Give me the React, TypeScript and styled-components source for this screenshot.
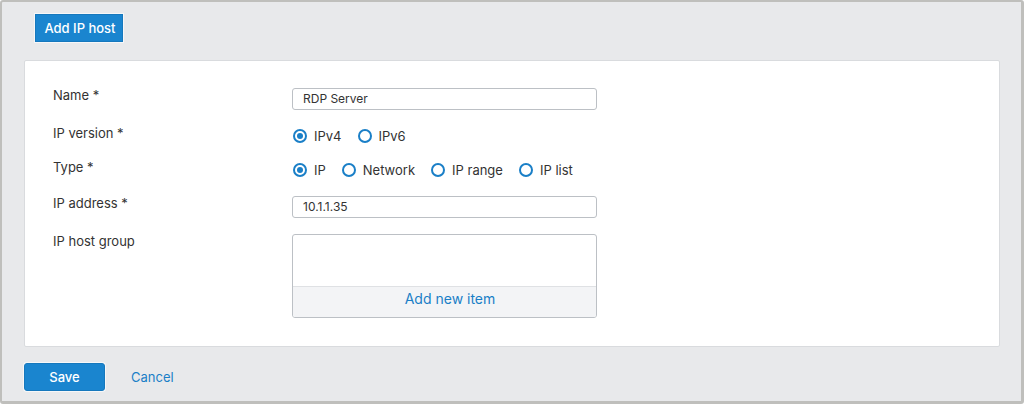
import React from "react";
import styled, { createGlobalStyle } from "styled-components";

const Global = createGlobalStyle`
  html, body { margin: 0; padding: 0; }
  body { font-family: Inter, "Noto Sans", "Liberation Sans", sans-serif; color: #333; }
  * { box-sizing: border-box; }
`;

const Frame = styled.div`
  width: 1024px;
  height: 404px;
  background: #e8e9eb;
  border-style: solid;
  border-color: #bfbfbc;
  border-width: 2px 3px 3px 2px;
  border-radius: 3px;
  padding: 12px 21px 0 22px;
  display: flex;
  flex-direction: column;
`;

const Header = styled.div`
  display: flex;
  padding-left: 11px;
  height: 28px;
`;

const PrimaryButton = styled.button<{ $w: number }>`
  width: ${(p) => p.$w}px;
  height: 28px;
  background: #1a85cf;
  border: 1px solid #1678bd;
  border-radius: 3px;
  color: #fff;
  font-family: inherit;
  font-size: 13px;
  font-weight: 500;
  padding: 0;
  cursor: pointer;
  box-shadow: 0 0 0 1px #f6f7f8;
`;

const HeaderButton = styled(PrimaryButton)`
  border-radius: 0;
  padding-left: 2px;
`;

const Card = styled.div`
  margin-top: 18px;
  background: #fff;
  border: 1px solid #d9dbde;
  border-radius: 2px;
  padding: 27px 0 28px 28px;
  display: flex;
  flex-direction: column;
`;

const Row = styled.div<{ $mb: number }>`
  display: grid;
  grid-template-columns: 239px 305px;
  align-items: start;
  margin-bottom: ${(p) => p.$mb}px;
`;

const Label = styled.div`
  font-size: 13px;
  line-height: 14px;
  color: #333;
`;

const TextInput = styled.div`
  height: 22px;
  border: 1px solid #bcc0c5;
  border-radius: 3px;
  padding-left: 10px;
  font-size: 12px;
  line-height: 20px;
  color: #333;
`;

const RadioGroup = styled.div`
  display: flex;
  align-items: center;
  height: 20px;
  gap: 16px;
  padding-left: 1px;
`;

const RadioItem = styled.label`
  display: flex;
  align-items: center;
  gap: 7px;
  font-size: 13px;
  color: #333;
`;

const Circle = styled.span<{ $on?: boolean }>`
  width: 14px;
  height: 14px;
  border-radius: 50%;
  border: 2px solid #1a7fc7;
  display: flex;
  align-items: center;
  justify-content: center;
  &::after {
    content: "";
    width: 6px;
    height: 6px;
    border-radius: 50%;
    background: ${(p) => (p.$on ? "#1a7fc7" : "transparent")};
  }
`;

const ListBox = styled.div`
  height: 84px;
  border: 1px solid #bcc0c5;
  border-radius: 3px;
  display: flex;
  flex-direction: column;
  overflow: hidden;
`;

const ListBody = styled.div`
  flex: 1;
`;

const ListFooter = styled.div`
  height: 31px;
  background: #f3f4f6;
  border-top: 1px solid #dfe1e4;
  display: flex;
  justify-content: center;
  padding: 4px 0 0 11px;
  font-size: 14px;
  line-height: 16px;
  color: #1a7fc7;
`;

const Footer = styled.div`
  display: flex;
  align-items: center;
  gap: 26px;
  margin-top: 16px;
`;

const LinkButton = styled.span`
  font-size: 13px;
  color: #1a7fc7;
  cursor: pointer;
`;

const Radio = ({ label, on }: { label: string; on?: boolean }) => (
  <RadioItem>
    <Circle $on={on} />
    {label}
  </RadioItem>
);

export default function App() {
  return (
    <>
      <Global />
      <Frame>
        <Header>
          <HeaderButton $w={88}>Add IP host</HeaderButton>
        </Header>
        <Card>
          <Row $mb={16}>
            <Label>Name *</Label>
            <TextInput>RDP Server</TextInput>
          </Row>
          <Row $mb={14}>
            <Label>IP version *</Label>
            <RadioGroup>
              <Radio label="IPv4" on />
              <Radio label="IPv6" />
            </RadioGroup>
          </Row>
          <Row $mb={16}>
            <Label>Type *</Label>
            <RadioGroup>
              <Radio label="IP" on />
              <Radio label="Network" />
              <Radio label="IP range" />
              <Radio label="IP list" />
            </RadioGroup>
          </Row>
          <Row $mb={16}>
            <Label>IP address *</Label>
            <TextInput>10.1.1.35</TextInput>
          </Row>
          <Row $mb={0}>
            <Label>IP host group</Label>
            <ListBox>
              <ListBody />
              <ListFooter>Add new item</ListFooter>
            </ListBox>
          </Row>
        </Card>
        <Footer>
          <PrimaryButton $w={81}>Save</PrimaryButton>
          <LinkButton>Cancel</LinkButton>
        </Footer>
      </Frame>
    </>
  );
}
